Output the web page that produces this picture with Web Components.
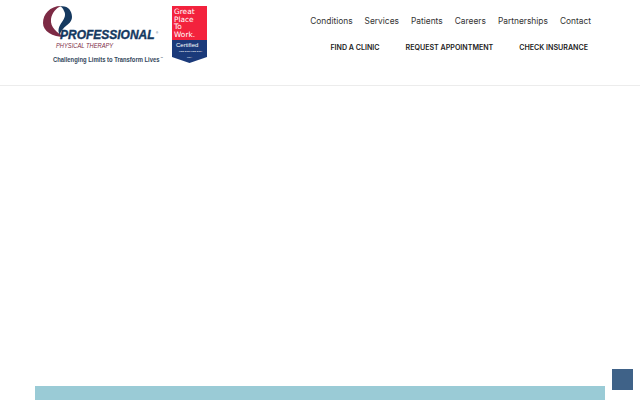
<!DOCTYPE html>
<html lang="en">
<head>
  <meta charset="UTF-8">
  <title>Professional Physical Therapy</title>
  <style>
    html, body { margin: 0; padding: 0; background: #fff; overflow: hidden; }
    body { height: 400px; font-family: "Inter", "Liberation Sans", sans-serif; }
  </style>
</head>
<body>
  <pt-page>
    <pt-header>
      <pt-logo slot="logo"></pt-logo>
      <pt-badge slot="logo"></pt-badge>
      <pt-nav slot="nav" kind="main">
        <a>Conditions</a><a>Services</a><a>Patients</a><a>Careers</a><a>Partnerships</a><a>Contact</a>
      </pt-nav>
      <pt-nav slot="nav" kind="cta">
        <a>FIND A CLINIC</a><a>REQUEST APPOINTMENT</a><a>CHECK INSURANCE</a>
      </pt-nav>
    </pt-header>
    <pt-band></pt-band>
  </pt-page>
  <pt-top></pt-top>

  <template id="pt-page">
    <style>
      :host { display: flex; flex-direction: column; height: 400px; overflow: hidden; }
    </style>
    <slot></slot>
  </template>

  <template id="pt-header">
    <style>
      :host { display: flex; justify-content: space-between; height: 85px; padding: 0 48px 0 42px; border-bottom: 1px solid #ececec; box-sizing: content-box; }
      .logos { display: flex; align-items: flex-start; gap: 8px; padding-top: 5px; }
      .nav { display: flex; flex-direction: column; align-items: flex-end; }
    </style>
    <div class="logos"><slot name="logo"></slot></div>
    <div class="nav"><slot name="nav"></slot></div>
  </template>

  <template id="pt-logo">
    <style>
      :host { display: block; width: 122px; height: 62px; }
      svg { display: block; }
    </style>
    <svg width="122" height="62" viewBox="0 0 122 62">
      <path d="M19 1C8 1 1 9 1 18c0 8 9 14 22 14C15 28 8 22 9 14c1-6 5-11 10-13z" fill="#7c2a44"/>
      <path d="M18 1.500C25 0 30 5 30 12c0 6-6 8-9 12-2 2-3 4-3 6-3-4-1-9 2-13 3-4 4-8 2-11-1-2.500-2-4-4-4.500z" fill="#15395f"/>
      <g font-family="'Liberation Sans',sans-serif">
        <text transform="translate(18 33.500) scale(.882 1)" font-size="13.600" font-weight="700" font-style="italic" fill="#15395f" stroke="#15395f" stroke-width=".4">PROFESSIONAL</text>
        <text x="114" y="29" font-size="3" fill="#15395f">®</text>
        <text transform="translate(14 42.500) scale(.875 1)" font-size="6.600" font-style="italic" fill="#7c2a44">PHYSICAL THERAPY</text>
        <text transform="translate(11 56.500) scale(.863 1)" font-size="6.800" font-weight="700" fill="#33475b">Challenging Limits to Transform Lives</text>
        <text x="118.500" y="53.500" font-size="2.500" fill="#33475b">™</text>
      </g>
    </svg>
  </template>

  <template id="pt-badge">
    <style>
      :host { display: block; width: 36px; height: 60px; }
      svg { display: block; }
    </style>
    <svg width="36" height="60" viewBox="0 0 36 60">
      <rect x="0" y="1" width="35" height="34" fill="#f3223d"/>
      <path d="M0 35h35v17L17.500 58 0 52z" fill="#1b3a7a"/>
      <g font-family="'DejaVu Sans',sans-serif" fill="#fff" font-size="7.400">
        <text x="2" y="9">Great</text>
        <text x="2" y="16.500">Place</text>
        <text x="2" y="24">To</text>
        <text x="2" y="31.500">Work.</text>
      </g>
      <g font-family="'Liberation Sans',sans-serif" fill="#fff">
        <text x="4" y="42" font-size="6">Certified</text>
        <text x="7" y="47" font-size="2.500">FEB 2023-FEB 2024</text>
        <text x="15" y="53" font-size="2.500">USA</text>
      </g>
    </svg>
  </template>

  <template id="pt-nav">
    <style>
      :host { display: flex; line-height: 14px; }
      :host([kind=main]) { gap: 12px; padding: 14px 1px 0 0; font-size: 8.400px; color: #333; }
      :host([kind=cta]) { gap: 26px; padding: 13px 4px 0 0; font-weight: 600; font-size: 7.100px; color: #222; }
      ::slotted(a) { display: block; white-space: nowrap; }
    </style>
    <slot></slot>
  </template>

  <template id="pt-band">
    <style>
      :host { display: block; height: 14px; margin: 300px 35px 0; background: #9acbd6; flex: none; }
    </style>
  </template>

  <template id="pt-top">
    <style>
      :host { position: fixed; left: 612px; top: 369px; width: 21px; height: 21px; background: #3f6288; }
    </style>
  </template>

  <script>
    for (const name of ['pt-page', 'pt-header', 'pt-logo', 'pt-badge', 'pt-nav', 'pt-band', 'pt-top']) {
      customElements.define(name, class extends HTMLElement {
        connectedCallback() {
          if (this.shadowRoot) return;
          this.attachShadow({mode: 'open'});
          this.shadowRoot.appendChild(document.getElementById(name).content.cloneNode(true));
        }
      });
    }
  </script>
</body>
</html>
